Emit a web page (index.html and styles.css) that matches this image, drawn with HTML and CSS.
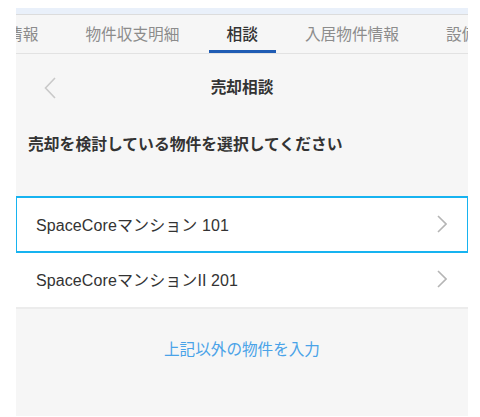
FILE: index.html
```html
<!DOCTYPE html>
<html lang="ja">
<head>
<meta charset="utf-8">
<link rel="stylesheet" href="styles.css">
</head>
<body>
<div class="screen">
  <div class="topstrip"></div>
  <div class="tabs">
    <div class="tab-track">
      <div class="tab">情報</div>
      <div class="tab">物件収支明細</div>
      <div class="tab active">相談</div>
      <div class="tab">入居物件情報</div>
      <div class="tab">設備</div>
    </div>
  </div>
  <div class="nav">
    <div class="back">
      <svg width="12" height="22" viewBox="0 0 12 22"><path d="M11 1 L1.5 11 L11 21" fill="none" stroke="#c9c9c9" stroke-width="1.6"/></svg>
    </div>
    <div class="nav-title">売却相談</div>
    <div></div>
  </div>
  <p class="prompt">売却を検討している物件を選択してください</p>
  <ul class="list">
    <li class="row selected">
      <span class="row-label">SpaceCoreマンション 101</span>
      <svg class="chev" width="10" height="18" viewBox="0 0 10 18"><path d="M1 1 L9 9 L1 17" fill="none" stroke="#b5b5b5" stroke-width="1.6"/></svg>
    </li>
    <li class="row">
      <span class="row-label">SpaceCoreマンションII 201</span>
      <svg class="chev" width="10" height="18" viewBox="0 0 10 18"><path d="M1 1 L9 9 L1 17" fill="none" stroke="#b5b5b5" stroke-width="1.6"/></svg>
    </li>
  </ul>
  <div class="other">
    <a class="other-link" href="#">上記以外の物件を入力</a>
  </div>
</div>
</body>
</html>
```
FILE: styles.css
```css
* { box-sizing: border-box; }
html, body { margin: 0; padding: 0; background: #ffffff; }
body {
  font-family: "Liberation Sans", "Noto Sans CJK JP", sans-serif;
  color: #333333;
}
.screen {
  margin: 8px 0 0 16px;
  width: 452px;
  height: 408px;
  background: #f6f6f6;
  overflow: hidden;
}
.topstrip {
  height: 7px;
  background: #e9f0fa;
  border-bottom: 1px solid #dcdcdc;
}
.tabs {
  height: 39px;
  border-bottom: 1px solid #e2e2e2;
  overflow: hidden;
  background: #f6f6f6;
}
.tab-track {
  display: flex;
  gap: 11px;
  margin-left: -27px;
  height: 38px;
}
.tab {
  flex: none;
  padding: 0 18px;
  height: 38px;
  line-height: 37px;
  font-family: "Noto Sans CJK JP", sans-serif;
  font-size: 15.7px;
  color: #8c8c8c;
  white-space: nowrap;
  border-bottom: 3px solid transparent;
}
.tab.active {
  color: #333333;
  font-weight: 500;
  border-bottom-color: #1f5cb4;
}
.nav {
  height: 68px;
  display: grid;
  grid-template-columns: 60px 1fr 60px;
  align-items: center;
}
.back {
  padding-left: 28px;
  display: flex;
  align-items: center;
}
.nav-title {
  text-align: center;
  font-family: "Noto Sans CJK JP", sans-serif;
  font-size: 15.7px;
  font-weight: 700;
  line-height: 22px;
  padding-bottom: 2px;
  color: #333333;
}
.prompt {
  margin: 11px 0 0 0;
  padding-left: 12px;
  font-family: "Noto Sans CJK JP", sans-serif;
  font-size: 15.8px;
  font-weight: 700;
  line-height: 22px;
  color: #333333;
}
.list {
  list-style: none;
  margin: 42px 0 0 0;
  padding: 0;
  background: #ffffff;
  border-bottom: 2px solid #ececec;
}
.row {
  height: 55px;
  display: flex;
  align-items: center;
  justify-content: space-between;
  padding: 0 21px 2px 20px;
  background: #ffffff;
  font-size: 16px;
  color: #333333;
}
.row.selected {
  outline: 2px solid #17b3f0;
  outline-offset: -1px;
  position: relative;
}
.row-label { letter-spacing: 0.1px; }
.chev { display: block; }
.other {
  padding-top: 28px;
  text-align: center;
}
.other-link {
  font-family: "Noto Sans CJK JP", sans-serif;
  font-size: 15.6px;
  line-height: 22px;
  color: #4aa3e8;
  text-decoration: none;
}
```
